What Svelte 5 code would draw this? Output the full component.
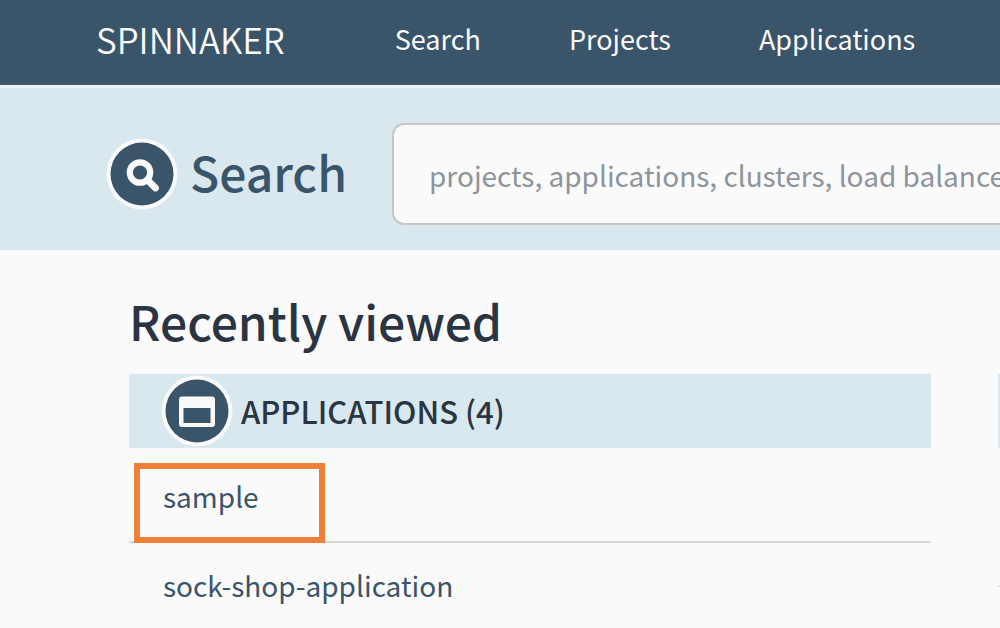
<script>
  const navItems = ['Search', 'Projects', 'Applications'];
  const applications = [
    { name: 'sample', highlighted: true },
    { name: 'sock-shop-application', highlighted: false }
  ];
</script>

<header class="topbar">
  <a class="brand" href="#home">SPINNAKER</a>
  <nav>
    {#each navItems as item}
      <a href={'#' + item.toLowerCase()}>{item}</a>
    {/each}
  </nav>
</header>

<section class="search">
  <label class="search-title" for="global-search">
    <svg class="badge" viewBox="0 0 72 72" aria-hidden="true">
      <circle cx="36" cy="36" r="35.5" fill="#fafafa" />
      <circle cx="36" cy="36" r="31.5" fill="#3a5469" />
      <circle cx="34" cy="34.5" r="10.2" fill="none" stroke="#fafafa" stroke-width="6.2" />
      <path d="M41.5 42 L49.5 50" stroke="#fafafa" stroke-width="6.8" stroke-linecap="round" />
    </svg>
    <span>Search</span>
  </label>
  <input id="global-search" type="text" placeholder="projects, applications, clusters, load balancers, server groups" />
</section>

<main>
  <h1>Recently viewed</h1>
  <div class="columns">
    <section>
      <h2>
        <svg class="badge" viewBox="0 0 72 72" aria-hidden="true">
          <circle cx="36" cy="36" r="35.5" fill="#fafafa" />
          <circle cx="36" cy="36" r="31.5" fill="#3a5469" />
          <path fill-rule="evenodd" fill="#fafafa" d="M21 21.5 H51 Q54 21.5 54 24.5 V49 Q54 52 51 52 H21 Q18 52 18 49 V24.5 Q18 21.5 21 21.5 Z M22.5 33 V48 H49.5 V33 Z" />
        </svg>
        <span>APPLICATIONS (4)</span>
      </h2>
      <ul>
        {#each applications as app}
          <li class:highlighted={app.highlighted}><a href={'#' + app.name}>{app.name}</a></li>
        {/each}
      </ul>
    </section>
    <div class="next-column">
      <div class="next-head"></div>
      <div class="next-row"></div>
    </div>
  </div>
</main>

<style>
  :global(body) {
    margin: 0;
    background: #fafafa;
    color: #2b3442;
    font-family: 'Noto Sans CJK SC', 'Noto Sans', sans-serif;
    overflow-x: hidden;
  }
  a {
    color: inherit;
    text-decoration: none;
  }
  .topbar {
    display: flex;
    align-items: center;
    box-sizing: border-box;
    height: 85px;
    padding: 0 88px 6px 96px;
    background: #3a5469;
    border-bottom: 2px solid #4d5767;
    color: #fafafa;
  }
  .brand {
    font-size: 35px;
    font-weight: 350;
    line-height: 40px;
  }
  nav {
    display: flex;
    flex: 1;
    gap: 88px;
    margin-left: 110px;
    font-size: 27px;
    line-height: 40px;
  }
  .search {
    display: flex;
    align-items: center;
    box-sizing: border-box;
    height: 165px;
    padding: 10px 0 0 106px;
    border-top: 3px solid #ecf2f5;
    background: #d9e8ee;
    overflow: hidden;
  }
  .search-title {
    display: flex;
    flex: none;
    align-items: center;
    gap: 12px;
    width: 286px;
    color: #3a5469;
    font-size: 48px;
    font-weight: 500;
    line-height: 56px;
  }
  .search-title span {
    padding-bottom: 6px;
  }
  .badge {
    flex: none;
    width: 72px;
    height: 72px;
  }
  input {
    flex: 1;
    box-sizing: border-box;
    min-width: 0;
    height: 102px;
    margin-right: -16px;
    padding: 2px 0 0 35px;
    border: 2px solid #c6c6c4;
    border-radius: 12px;
    background: #fafafa;
    color: #3a5469;
    font: inherit;
    font-size: 28px;
  }
  input::placeholder {
    color: #8d949c;
    opacity: 1;
  }
  main {
    padding: 40px 0 0 129px;
  }
  h1 {
    margin: 0 0 24px;
    font-size: 48px;
    font-weight: 500;
    line-height: 60px;
  }
  .columns {
    display: grid;
    grid-template-columns: minmax(0, 1fr) 2px;
    gap: 67px;
  }
  h2 {
    display: flex;
    align-items: center;
    gap: 8px;
    height: 74px;
    margin: 0;
    padding-left: 32px;
    background: #d9e8ee;
    font-size: 31px;
    font-weight: 500;
    line-height: 40px;
  }
  ul {
    margin: 0;
    padding: 6px 0 0;
    list-style: none;
  }
  li {
    position: relative;
    padding: 22px 34px 25px;
    border-bottom: 2px solid #d8d8d4;
    color: #3a5469;
    font-size: 28px;
    line-height: 40px;
  }
  .highlighted::after {
    content: '';
    position: absolute;
    top: 9px;
    bottom: -2px;
    left: 5px;
    box-sizing: border-box;
    width: 191px;
    border: 6px solid #f07f37;
  }
  .next-head {
    height: 74px;
    background: #d9e8ee;
  }
  .next-row {
    height: 137px;
    border-bottom: 2px solid #e2e8ea;
  }
</style>
